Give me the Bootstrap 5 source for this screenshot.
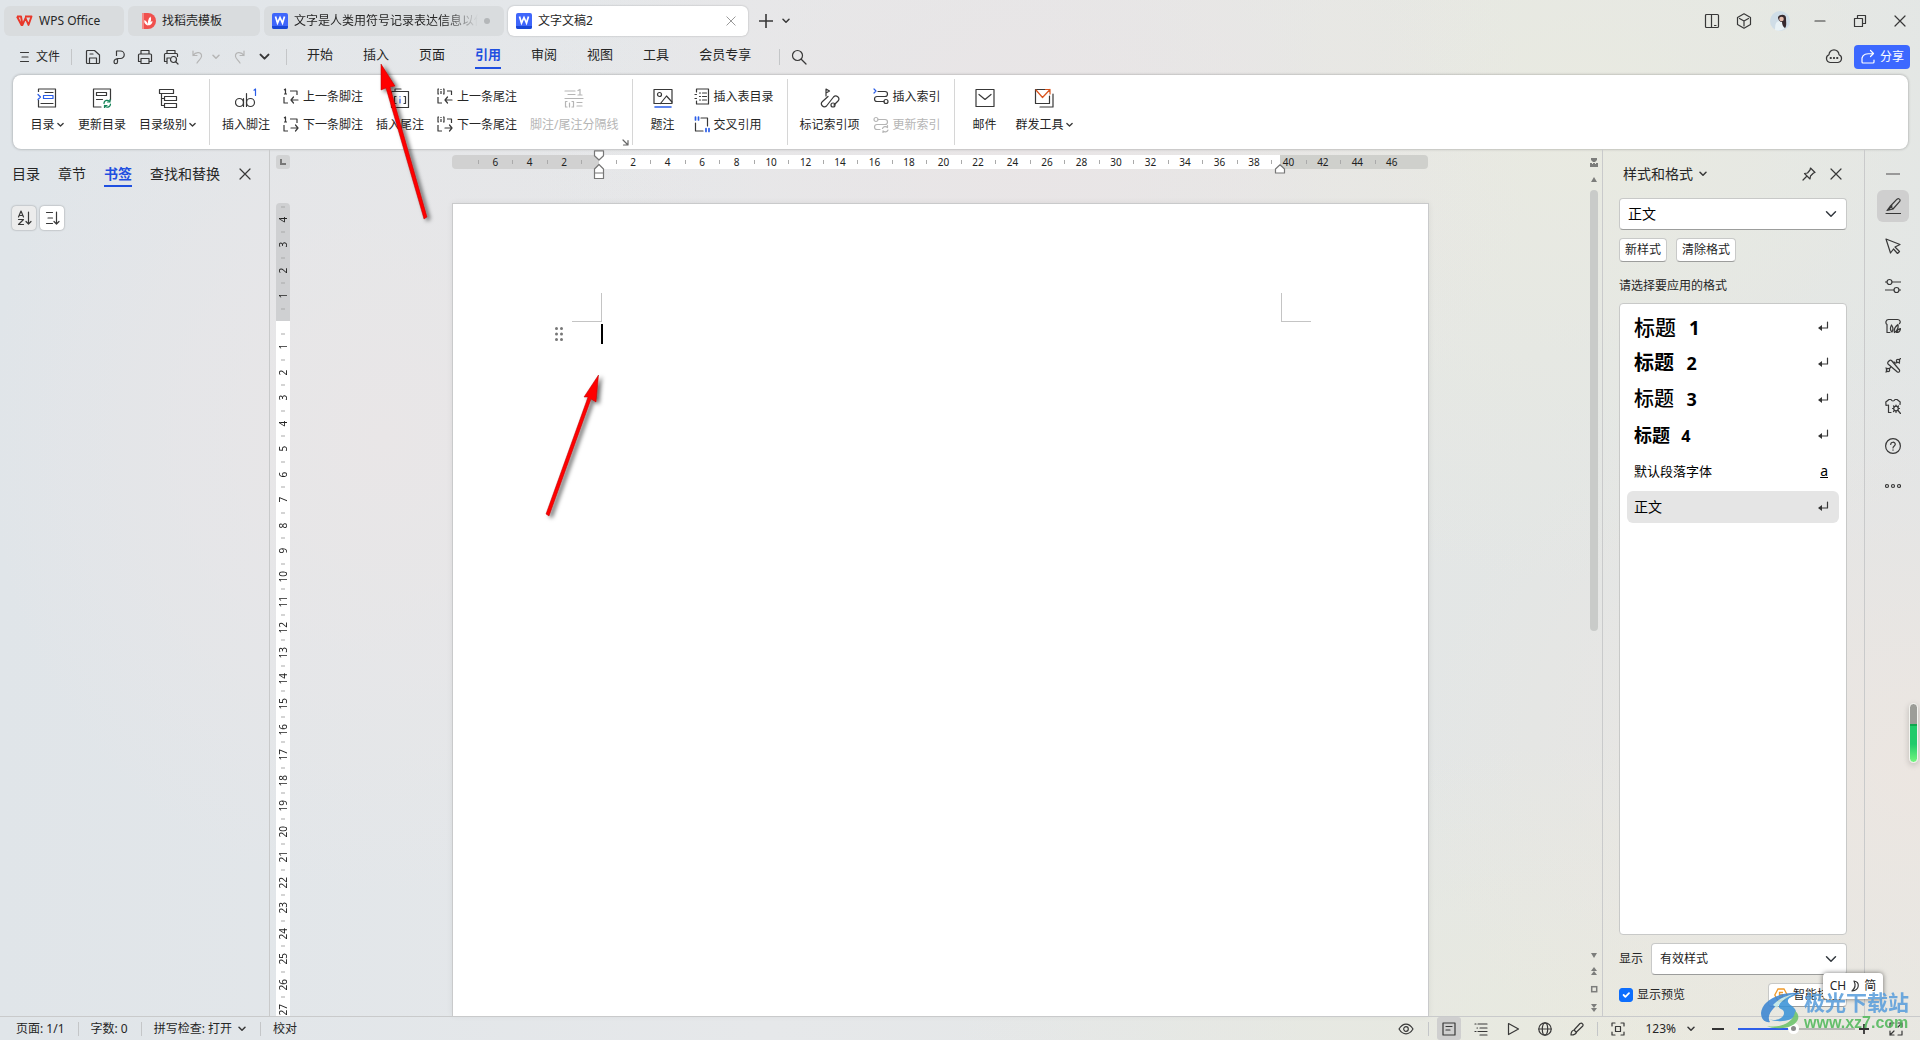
<!DOCTYPE html>
<html lang="zh-CN">
<head>
<meta charset="utf-8">
<meta name="viewport" content="width=device-width, initial-scale=1">
<title>文字文稿2 - WPS Office</title>
<link href="https://cdn.jsdelivr.net/npm/bootstrap@5.3.0/dist/css/bootstrap.min.css" rel="stylesheet">
<style>
:root{--ink:#262626;--edge:#c9cacb;--brand:#1f4fe0;--ui:"Noto Sans","Noto Sans CJK SC",sans-serif}
body{font:12px/16px var(--ui);color:var(--ink);background:
 radial-gradient(ellipse 500px 420px at 100% 74%,#ece6e1 0,#ece6e100 100%),
 radial-gradient(ellipse 500px 400px at 54% 14%,#e9e5e6 0,#e9e5e600 100%),
 radial-gradient(ellipse 400px 460px at 20% 42%,#e9e6e7 0,#e9e6e700 100%),
 radial-gradient(ellipse 560px 460px at 82% 12%,#e9eae1 0,#e9eae100 100%),
 radial-gradient(ellipse 700px 300px at 86% 100%,#e9eadf 0,#e9eadf00 100%),
 linear-gradient(90deg,#e0e5e9,#e6e8ea 40%,#e3e6e5 80%,#e1e5e7)}
svg{display:block;flex:none}
.ic{fill:none;stroke:#383838;stroke-width:1.2;stroke-linecap:round;stroke-linejoin:round}
button{border:0;background:none;padding:0;color:inherit;font:inherit;white-space:nowrap}
a{color:inherit;text-decoration:none}
.flat{display:flex;align-items:center;justify-content:center}
.vline{width:1px;background:#c4c6c8;flex:none}

/* title bar */
.titlebar{height:38px;padding:6px 0 2px 4px}
.doctab{height:30px;border-radius:6px;background:#d9dcde;padding:0 12px;display:flex;align-items:center;gap:6px}
.doctab.now{background:#fff;box-shadow:0 0 2px #0004;padding-left:8px;width:240px}
.docname{width:184px;overflow:hidden;white-space:nowrap;-webkit-mask-image:linear-gradient(90deg,#000 82%,#0000)}
.dot{width:6px;height:6px;border-radius:50%;background:#b4b7b9}
.win .flat{width:40px;height:28px}
.win .narrow{width:32px}

/* menu row */
.menurow{height:37px;padding-left:14px;padding-right:10px}
.menurow .vline{height:16px}
.quick .flat{width:26px;height:24px}
.quick .slim{width:12px}
.menus{gap:30px;font-size:13px;line-height:18px;padding:7px 0 0 20px}
.menus a{height:24px;border-bottom:2px solid transparent}
.menus a.on,.panetabs a.on{color:var(--brand);font-weight:700;border-bottom-color:var(--brand)}
.share{background:#3c68ff;color:#fff;border-radius:4px;width:56px;height:24px;gap:4px}
.share .ic{stroke:#fff}

/* ribbon */
.ribbon{margin:0 12px 0 13px;height:74px;background:#fff;border-radius:8px;box-shadow:0 0 3px #0005;padding-left:3px}
.rgroup{display:flex;gap:13px;padding:9px 13px 0;height:66px;margin-top:4px;position:relative}
.rgroup+.rgroup{border-left:1px solid #d6d6d6;padding-left:12px}
.rgroup:last-child{padding-right:0}
.big{display:flex;flex-direction:column;align-items:center;gap:9px;min-width:36px;height:45px}
.big span{display:flex;align-items:center;gap:2px}
.pairs{display:flex;flex-direction:column;gap:11px}
.pairs button{display:flex;align-items:center;gap:4px;height:17px}
.off{color:#b5b5b5}
.off .ic,.off.ic{stroke:#b5b5b5}
.launch{position:absolute;right:3px;bottom:-1px}

/* left pane */
.navpane{width:270px;border-right:1px solid var(--edge);padding:15px 12px 0}
.panetabs{gap:18px;font-size:14px;line-height:20px;height:24px}
.panetabs a{height:23px;border-bottom:2px solid transparent;white-space:nowrap}
.tool{width:24px;height:24px;border-radius:4px;background:#fff;box-shadow:0 0 2px #0006}
.tool.dim{background:#ececec}

/* document area */
.docarea{padding:6px 0 0 6px}
.num{font-size:10px;line-height:14px;color:#222}
.corner{width:14px;height:14px;border-radius:3px;background:#d2d3d4}
.hruler{height:14px;width:976px;border-radius:4px;padding:0 19px 0 26px;background:linear-gradient(90deg,#d1d1d1 147px,#fff 147px 828px,#cfd0cc 828px);position:relative}
.hruler span,.vruler span{flex:1 1 0;min-width:0;min-height:0;display:flex;align-items:center;justify-content:center;position:relative}
.hruler span::before{content:"";position:absolute;left:0;top:5px;height:4px;border-left:1px solid #aaa}
.marker{position:absolute}
.vruler{width:14px;overflow:hidden;border-radius:4px 4px 0 0;background:linear-gradient(#cfd0d2 118px,#fff 118px)}
.vrun{height:820px;padding-top:4px}
.vruler span{writing-mode:vertical-rl;transform:rotate(180deg)}
.vruler span::before{content:"";position:absolute;bottom:0;left:5px;width:4px;border-top:1px solid #aaa}
.sheet{width:977px;background:#fff;border:1px solid var(--edge);border-bottom:0;box-shadow:0 0 6px #0001;padding:89px 117px 0 119px}
.crop{width:30px;height:29px;border-bottom:1px solid #c4c4c4}
.crop.l{border-right:1px solid #c4c4c4}
.crop.r{border-left:1px solid #c4c4c4}
.caret{width:2px;height:20px;background:#000;margin-left:38px}
.lineedit{margin:2px 0 0 -17px}
.vbar{width:12px;padding:3px 4px 4px 0}
.thumb{width:8px;height:441px;border-radius:4px;background:#c9cbc9}

/* style pane */
.stylepane{width:262px;border-left:1px solid var(--edge);padding:14px 17px 9px 16px}
.box{background-color:#fff;border:1px solid #c8c9c8;border-bottom-color:#9c9d9c;border-radius:4px}
.stylepane .form-select{height:32px;padding:0 28px 0 8px;font-size:12px;line-height:20px;color:#222;background-size:12px 12px;background-position:right 9px center;box-shadow:none;font-family:var(--ui)}
.stylepane .form-select.lg{font-size:14px;color:#000}
.box.small-btn{height:24px;padding:0 5px}
.styles{border-bottom-color:#c8c9c8;padding:5px 7px}
.styles li{height:36px;padding:0 10px 0 7px;display:flex;align-items:center;justify-content:space-between;color:#000;line-height:30px}
.styles li.pick{height:32px;margin-top:2px;background:#e5e5e5;border-radius:6px;font-size:14px}
.h-a{font-size:21px;font-weight:500}.h-b{font-size:20px;font-weight:700}.h-c{font-size:20px;font-weight:500}.h-d{font-size:18px;font-weight:700}
.styles i{font-style:normal;font-weight:700;font-size:.9em;margin-left:.4em}
.stylepane .form-check-input{width:14px;height:14px;margin:0;background-color:#0d6efd}
.sidebar{width:56px;border-left:1px solid var(--edge);padding-top:17px;gap:8px}
.sidebar .flat{width:32px;height:32px;border-radius:6px}
.sidebar .flat.fold{height:16px}
.sidebar .on,.status .on{background:#cfcfcf}

/* status bar */
.status{height:24px;border-top:1px solid var(--edge);padding:0 12px 0 16px}
.status .vline{height:14px;margin:0 12px 0 13px}
.status .flat{width:24px;height:23px;border-radius:3px}
.zoom{appearance:none;width:117px;height:12px;background:linear-gradient(90deg,#2f5fe8 47%,#b6b8b4 47%) center/100% 2px no-repeat}
.zoom::-webkit-slider-thumb{appearance:none;width:11px;height:11px;border-radius:50%;background:#8a8a8a;border:3px solid #fff}

/* floating layers */
.arrows{position:absolute;left:360px;top:50px;pointer-events:none}
.meter{position:absolute;right:2px;top:703px;width:9px;height:60px;border:1px solid #f4f4f0;border-radius:5px;background:linear-gradient(#9c9d98 20px,#0fa84e 20px 22px,#20cb6b 22px 40px,#74f57f);box-shadow:0 2px 6px #0003}
.ime{position:absolute;right:37px;bottom:41px;width:60px;height:26px;border-radius:4px;background:#fff;box-shadow:0 0 5px #0008;gap:4px}
.wm{position:absolute;right:11px;bottom:8px;pointer-events:none;opacity:.88}
.wm-a{font-size:21px;line-height:24px;font-weight:700;color:#5b9fdc}
.wm-b{font:700 16px/18px "Liberation Sans",sans-serif;color:#52b95c}
</style>
</head>
<body class="vh-100 overflow-hidden position-relative">
<svg width="0" height="0" class="position-absolute">
 <defs>
 <symbol id="chev" viewBox="0 0 8 6"><path d="M1 1.200 4 4.200 7 1.200" stroke-width="1.500"/></symbol>
 <symbol id="x" viewBox="0 0 12 12"><path d="M1 1 11 11M11 1 1 11"/></symbol>
 <symbol id="word" viewBox="0 0 16 16"><rect width="16" height="16" rx="2" fill="#3f66fb" stroke="none"/><path d="M0 13h16v1a2 2 0 0 1-2 2H2a2 2 0 0 1-2-2z" fill="#1947d6" stroke="none"/><path d="M3.500 3.500 5.500 10 8 4.500 10.500 10 12.500 3.500" fill="none" stroke="#fff" stroke-width="1.700"/></symbol>
 <symbol id="ret" viewBox="0 0 12 12"><path d="M10.500 1v6H3"/><path d="M1 7 5 4v6z" fill="#333" stroke="none"/></symbol>
 <symbol id="foot" viewBox="0 0 16 17"><path d="M1 2 2.500 1v5M1 6h3M7 3h7v4M1 9v6h4" stroke-linecap="butt"/></symbol>
 <symbol id="end" viewBox="0 0 16 17"><path d="M2 1H1v5h1M6 1h1v5H6M4 1v1M4 3v3M10 3h4.500v4M1 9v6h4" stroke-linecap="butt"/></symbol>
 <symbol id="al" viewBox="0 0 16 17"><path d="M15 12H8M10.500 9 8 12l2.500 3"/></symbol>
 <symbol id="ar" viewBox="0 0 16 17"><path d="M8 12h7M12.500 9 15 12l-2.500 3"/></symbol>
 </defs>
</svg>

<div class="d-flex flex-column h-100">
<header>
 <div class="titlebar d-flex align-items-center">
  <nav class="d-flex align-items-center gap-1">
   <a href="#" class="doctab" style="width:120px"><svg width="17" height="12" viewBox="0 0 17 12"><path d="M1 1.500h4L6.500 10 9.500 3l3 7L15.500 1.500H9M1 1.500 5.500 10H7" fill="none" stroke="#e8382b" stroke-width="1.900" stroke-linejoin="round"/></svg><span>WPS Office</span></a>
   <a href="#" class="doctab" style="width:132px"><svg width="16" height="16" viewBox="0 0 16 16"><path d="M2 0h6a8 8 0 0 1 0 16H2z" fill="#f0504d"/><path d="M2 0h2v16H2z" fill="#f58a86"/><path d="M8 12.500C4 11.500 4 8 4.500 7c2 1 3.500 3 3.500 5.500zM8 12.500c-.5-3 0-7 2.500-9 1.300 3 .5 6-2.500 9zM8.500 12.500c.3-2 1.500-4 4-4.500 0 2.500-1.500 4.300-4 4.500z" fill="#fff"/></svg><span>找稻壳模板</span></a>
   <a href="#" class="doctab" style="width:240px;padding:0 8px"><svg width="16" height="16"><use href="#word"/></svg><span class="docname">文字是人类用符号记录表达信息以传</span><span class="dot"></span></a>
   <a href="#" class="doctab now"><svg width="16" height="16"><use href="#word"/></svg><span>文字文稿2</span><svg class="ic ms-auto" width="10" height="10" style="stroke:#999"><use href="#x"/></svg></a>
  </nav>
  <button class="flat ms-1" style="width:28px" aria-label="新建"><svg class="ic" width="14" height="14"><path d="M7 0v14M0 7h14" stroke-width="1.600"/></svg></button>
  <button class="flat" style="width:12px" aria-label="列表"><svg class="ic" width="8" height="6"><use href="#chev"/></svg></button>
  <div class="win d-flex align-items-center ms-auto">
   <button class="flat narrow" aria-label="分屏"><svg class="ic" width="16" height="16"><rect x="1.500" y="1.500" width="13" height="13" rx="1"/><path d="M7.500 1.500v13M10.500 12.500h1.500"/></svg></button>
   <button class="flat narrow" aria-label="应用"><svg class="ic" width="16" height="16"><path d="M8 .8 14.500 4.400v7.200L8 15.200 1.500 11.600V4.400zM3.500 5.500 8 8l4.500-2.500M8 8v5"/></svg></button>
   <button class="flat" aria-label="账户"><svg width="20" height="20"><circle cx="10" cy="10" r="10" fill="#cfdde7"/><path d="M5 19c0-6 1-9 5-9 3 0 4 4 4 8a10 10 0 0 1-9 1z" fill="#e9f2f6"/><path d="M8 6c2-3 8-3 8 1 0 4 1 8-1 10-2-1-3-4-3-6-2 0-4-2-4-5z" fill="#36292e"/><circle cx="11.500" cy="8" r="2.300" fill="#e6bdae"/></svg></button>
   <button class="flat" aria-label="最小化"><svg class="ic" width="12" height="12"><path d="M1 6h10"/></svg></button>
   <button class="flat" aria-label="还原"><svg class="ic" width="14" height="14"><path d="M1.500 4.500h8v8h-8zM4.500 4.500v-3h8v8h-3"/></svg></button>
   <button class="flat" aria-label="关闭"><svg class="ic" width="12" height="12"><use href="#x"/></svg></button>
  </div>
 </div>

 <div class="menurow d-flex">
  <div class="quick d-flex align-items-center">
   <button class="d-flex align-items-center" style="gap:6px;padding:0 11px 0 4px"><svg class="ic" width="12" height="12"><path d="M2.500 1.500h8M4 6h6M2.500 10.500h8"/></svg>文件</button>
   <span class="vline me-2"></span>
   <button class="flat" aria-label="保存"><svg class="ic" width="16" height="16"><path d="M1.500 2.500a1 1 0 0 1 1-1h7l5 4.500v7.500a1 1 0 0 1-1 1h-11a1 1 0 0 1-1-1zM4.500 14v-5h7v5M5 5h3"/></svg></button>
   <button class="flat" aria-label="输出"><svg class="ic" width="16" height="16"><path d="M5.500 6.500V2h4a3.700 3.700 0 0 1 0 7.500H6.500M6.500 9.500V13A1.700 1.700 0 0 1 3 13c0-2 2-3.500 5-3.500"/></svg></button>
   <button class="flat" aria-label="打印"><svg class="ic" width="16" height="16"><path d="M4 5V1.500h8V5M3.500 12.500h-2V6q0-1 1-1h11q1 0 1 1v6.500h-2M4 9.500h8v5H4z"/></svg></button>
   <button class="flat" aria-label="打印预览"><svg class="ic" width="16" height="16"><path d="M4 4.500V1.500h8v3M3.500 12.500h-2v-7q0-1 1-1h11q1 0 1 1v2M4 14.500V9h3"/><circle cx="10.500" cy="10.500" r="3"/><path d="m12.800 12.800 2.200 2.200"/></svg></button>
   <button class="flat off" aria-label="撤销"><svg class="ic" width="14" height="14"><path d="M3 1v4.500h4M3 5.500C6 1 12 2 11.500 6.500 11 9 9 10 7 13"/></svg></button>
   <button class="flat slim off" aria-label="撤销列表"><svg class="ic" width="8" height="6"><use href="#chev"/></svg></button>
   <button class="flat off" style="width:36px" aria-label="恢复"><svg class="ic" width="14" height="14"><path d="M11 1v4.500H7M11 5.500C8 1 2 2 2.500 6.500 3 9 5 10 7 13"/></svg></button>
   <button class="flat slim" aria-label="更多"><svg class="ic" width="11" height="8"><use href="#chev"/></svg></button>
   <span class="vline ms-3"></span>
  </div>
  <nav class="menus d-flex"><a href="#">开始</a><a href="#">插入</a><a href="#">页面</a><a href="#" class="on">引用</a><a href="#">审阅</a><a href="#">视图</a><a href="#">工具</a><a href="#">会员专享</a></nav>
  <div class="d-flex align-items-center" style="padding-left:28px"><span class="vline" style="margin-right:7px"></span><button class="flat px-1" aria-label="搜索"><svg class="ic" width="16" height="16"><circle cx="6.500" cy="6.500" r="5"/><path d="m10.500 10.500 4.500 4.500"/></svg></button></div>
  <div class="d-flex align-items-center ms-auto gap-2">
   <button class="flat" style="margin-right:3px" aria-label="云"><svg class="ic" width="18" height="16"><path d="M5 13.500a4 4 0 0 1-1-7.700 5 5 0 0 1 10 0 4 4 0 0 1-1 7.700z"/><path d="M5.500 9h.5M8.800 9h.4M12 9h.5" stroke-width="1.800"/></svg></button>
   <button class="share flat"><svg class="ic" width="16" height="16"><path d="M2 9v4q0 1 1 1h10q1 0 1-1v-2M2 9C3 5 6 4.500 13 4.500M10.500 1.500l3 3-3 3"/></svg>分享</button>
  </div>
 </div>

 <div class="ribbon d-flex">
  <div class="rgroup">
   <button class="big"><svg class="ic" width="20" height="20"><path d="M1.500 4V1h17v18h-17v-7" stroke-linecap="butt"/><path d="M8 4.500h8M4 15.500h12"/><path d="M6.500 7.500H16v3H6.500zM1 6.500 3.500 9 1 11.500" stroke="#2a5de8"/></svg><span>目录<svg class="ic" width="7" height="6"><use href="#chev"/></svg></span></button>
   <button class="big"><svg class="ic" width="20" height="20"><path d="M9 19H1.500V1h17v11M4.500 4.500h10v3h-10zM4.500 11.500h6"/><path d="M12 15.500a3.200 3.200 0 0 1 6-1.500M18 11.500V14h-2.500M18.500 16a3.200 3.200 0 0 1-6 1.500M12.500 20v-2.500H15" stroke="#17855a"/></svg><span>更新目录</span></button>
   <button class="big"><svg class="ic" width="20" height="20"><path d="M1.500 1.500h14v4h-14zM6.500 8.500h12v4h-12zM6.500 15.500h12v4h-12zM3.500 5.500v12h3M3.500 10.500h3"/></svg><span>目录级别<svg class="ic" width="7" height="6"><use href="#chev"/></svg></span></button>
  </div>
  <div class="rgroup">
   <button class="big"><svg class="ic" width="22" height="20"><circle cx="4.500" cy="14.500" r="4"/><path d="M8.500 10.500v8M11.500 5.500v13"/><circle cx="15.500" cy="14.500" r="4"/><path d="m19 2.200 1.500-1.200v6.500" stroke="#2a5de8"/></svg><span>插入脚注</span></button>
   <div class="pairs"><button><svg class="ic" width="16" height="17"><use href="#foot"/><use href="#al"/></svg>上一条脚注</button><button><svg class="ic" width="16" height="17"><use href="#foot"/><use href="#ar"/></svg>下一条脚注</button></div>
   <button class="big"><svg class="ic" width="20" height="20"><path d="M5 3V1h6M1.500 3.500h17v16h-17zM6 8.500H4.500v7H6M14 8.500h1.500v7H14"/><path d="M10 11v4M10 8.500v.3" stroke="#2a5de8"/></svg><span>插入尾注</span></button>
   <div class="pairs"><button><svg class="ic" width="16" height="17"><use href="#end"/><use href="#al"/></svg>上一条尾注</button><button><svg class="ic" width="16" height="17"><use href="#end"/><use href="#ar"/></svg>下一条尾注</button></div>
   <button class="big off" disabled><svg class="ic" width="20" height="20"><path d="M1 3h10M4 6.500h7M14 2.500 16 1.500v5M14 7h4M1 10.500h18M3 13.500H1.500v5.500H3M8 13.500h1.500v5.500H8M5.500 15v4M13 14.500h5M13 18h5"/></svg><span>脚注/尾注分隔线</span></button>
   <button class="launch" aria-label="脚注设置"><svg class="ic" width="7" height="7"><path d="M1 1 5 5M6 1.500V6H1.500" stroke="#666"/></svg></button>
  </div>
  <div class="rgroup">
   <button class="big"><svg class="ic" width="20" height="20"><path d="M1 1.500h18v14H1z"/><circle cx="6.500" cy="6.500" r="2"/><path d="m7.500 15.500 6-7.500 5.500 6"/><path d="M2 19h16" stroke="#2a5de8" stroke-width="1.600"/></svg><span>题注</span></button>
   <div class="pairs"><button><svg class="ic" width="16" height="17"><path d="M2.500 4V1h12v15h-12v-3M5.500 5h1M8.500 5h4M5.500 8.500h1M8.500 8.500h4M5.500 12h1M8.500 12h4M1 6.500h1.500M1 10.500h1.500"/></svg>插入表目录</button><button><svg class="ic" width="16" height="17"><path d="M7 2h6.500v8M9 15H1.500V7"/><path d="M1.500 1v3M4.500 1v3M12 12.500v3M15 12.500v3" stroke="#2a5de8" stroke-width="1.700"/></svg>交叉引用</button></div>
  </div>
  <div class="rgroup">
   <button class="big"><svg class="ic" width="20" height="20"><path d="M6 8V1l3.500 2L6 5M8 8.500l-5.500 5a3 3 0 0 0 4 4.500l7-9a3 3 0 0 1 4.500 4l-4 4"/><circle cx="13" cy="17" r="2"/></svg><span>标记索引项</span></button>
   <div class="pairs"><button><svg class="ic" width="16" height="17"><path d="M5 3.500h7a2.500 2.500 0 0 1 0 5H4a2.500 2.500 0 0 0 0 5h7"/><circle cx="13" cy="13.500" r="2"/><path d="M1 1l2 2-2 2" stroke="#2a5de8"/></svg>插入索引</button><button class="off" disabled><svg class="ic" width="16" height="17"><circle cx="3" cy="3.500" r="2"/><path d="M5 3.500h7a2.500 2.500 0 0 1 0 5H4a2.500 2.500 0 0 0 0 5h3M9.500 12.500a3 3 0 0 1 5-1v-2M15 14a3 3 0 0 1-5 1v2"/></svg>更新索引</button></div>
  </div>
  <div class="rgroup">
   <button class="big"><svg class="ic" width="20" height="20"><path d="M1 1.500h18v17H1zM4 6.500l6 5 6-5"/></svg><span>邮件</span></button>
   <button class="big"><svg class="ic" width="20" height="20"><path d="M13 1.500H1.500v14h14V8M19 6v13H6"/><path d="m2 2 6.500 7.500L16 1.500M11.500 1.500H16V6" stroke="#d9541e"/></svg><span>群发工具<svg class="ic" width="7" height="6"><use href="#chev"/></svg></span></button>
  </div>
 </div>
</header>

<main class="d-flex flex-grow-1" style="min-height:0">
 <aside class="navpane flex-shrink-0">
  <div class="d-flex align-items-start"><nav class="panetabs d-flex"><a href="#">目录</a><a href="#">章节</a><a href="#" class="on">书签</a><a href="#">查找和替换</a></nav><button class="flat" style="margin-left:19px;height:20px" aria-label="关闭窗格"><svg class="ic" width="12" height="12"><use href="#x"/></svg></button></div>
  <div class="d-flex gap-1" style="margin-top:18px">
   <button class="tool dim flat" aria-label="按名称排序"><svg class="ic" width="15" height="16"><path d="M1.500 7 4 1l2.500 6M2.200 5.500h3.600M1.500 9.500h5l-5 5h5M11.500 2v12M9 11.500l2.500 2.500 2.500-2.500"/></svg></button>
   <button class="tool flat" aria-label="按位置排序"><svg class="ic" width="15" height="16"><path d="M1.500 2.500h6M3 8h4.500M1.500 13.500h6M11.500 2v12M9 11.500l2.500 2.500 2.500-2.500"/></svg></button>
  </div>
 </aside>

 <section class="docarea d-flex flex-column flex-grow-1">
  <div class="d-flex" style="height:48px">
   <span class="corner flat"><svg width="6" height="6"><path d="M1 0v5h5" fill="none" stroke="#777" stroke-width="2"/></svg></span>
   <div class="flex-grow-1 d-flex justify-content-center">
    <div class="hruler num d-flex" id="hr">
     <svg class="marker ic" style="left:141px;top:-5px;stroke:#777" width="12" height="30"><path d="M1.500.8h9v5L6 10 1.500 5.800zM1.500 23v-4L6 14.500l4.500 4.500v4zM1.500 23h9v5.500h-9z" fill="#fff"/></svg>
     <svg class="marker ic" style="left:822px;top:9px;stroke:#777" width="12" height="10"><path d="M1.500 9V5L6 .8 10.500 5v4z" fill="#fff"/></svg>
    </div>
   </div>
   <div class="vbar pb-0 d-flex flex-column align-items-center" style="gap:10px"><svg width="8" height="9"><path d="M1 0h6v2L5 4H3L1 2zM0 5h2v1h1V5h2v1h1V5h2v4H0z" fill="#7c7d7b"/></svg><svg width="8" height="6"><path d="M4 0 7 5H1z" fill="#7c7d7b"/></svg></div>
  </div>
  <div class="d-flex flex-grow-1" style="min-height:0">
   <div class="vruler num flex-shrink-0"><div class="vrun d-flex flex-column" id="vr"></div></div>
   <div class="flex-grow-1 d-flex justify-content-center">
    <div class="sheet">
     <div class="d-flex justify-content-between"><span class="crop l"></span><span class="crop r"></span></div>
     <div class="lineedit d-flex align-items-center"><svg width="8" height="14" fill="#777"><circle cx="1.500" cy="1.500" r="1.500"/><circle cx="6.500" cy="1.500" r="1.500"/><circle cx="1.500" cy="7" r="1.500"/><circle cx="6.500" cy="7" r="1.500"/><circle cx="1.500" cy="12.500" r="1.500"/><circle cx="6.500" cy="12.500" r="1.500"/></svg><span class="caret"></span></div>
    </div>
   </div>
   <div class="vbar d-flex flex-column align-items-center" style="padding-top:0;margin-top:-13px">
    <div class="thumb"></div>
    <svg class="mt-auto" width="8" height="60" fill="#7c7d7b"><path d="M1 1h6L4 6zM4 15l3 4H1zM4 19l3 4H1zM4 60 1 56h6zM4 56 1 52h6z"/><rect x="1.700" y="34.700" width="5" height="5" fill="none" stroke="#7c7d7b" stroke-width="1.500"/></svg>
   </div>
  </div>
 </section>

 <aside class="stylepane d-flex flex-column flex-shrink-0">
  <div class="d-flex align-items-center" style="height:22px;padding:0 5px 0 4px"><span style="font-size:14px">样式和格式</span><svg class="ic" style="margin-left:6px" width="8" height="6"><use href="#chev"/></svg>
   <button class="ms-auto" aria-label="固定"><svg class="ic" width="14" height="14"><path d="m8.500 1 4.500 4.500-1.500.5-3 3-.5 3L2.500 6.500 5.500 6 8 3zM5 9 1 13"/></svg></button>
   <button style="margin-left:14px" aria-label="关闭"><svg class="ic" width="12" height="12"><use href="#x"/></svg></button></div>
  <select class="form-select box lg" style="margin-top:13px" aria-label="当前样式"><option>正文</option></select>
  <div class="d-flex" style="gap:9px;margin-top:8px"><button class="box small-btn">新样式</button><button class="box small-btn">清除格式</button></div>
  <div style="margin:16px 0 9px">请选择要应用的格式</div>
  <ul class="styles box list-unstyled flex-grow-1 mb-0">
   <li><span class="h-a">标题 <i>1</i></span><svg class="ic" width="12" height="12"><use href="#ret"/></svg></li>
   <li><span class="h-b">标题 <i>2</i></span><svg class="ic" width="12" height="12"><use href="#ret"/></svg></li>
   <li><span class="h-c">标题 <i>3</i></span><svg class="ic" width="12" height="12"><use href="#ret"/></svg></li>
   <li><span class="h-d">标题 <i>4</i></span><svg class="ic" width="12" height="12"><use href="#ret"/></svg></li>
   <li><span style="font-size:13px">默认段落字体</span><u style="font-size:14px;padding-right:1px">a</u></li>
   <li class="pick"><span>正文</span><svg class="ic" width="12" height="12"><use href="#ret"/></svg></li>
  </ul>
  <div class="d-flex align-items-center" style="gap:8px;margin-top:8px"><label for="show" class="text-nowrap">显示</label><select id="show" class="form-select box"><option>有效样式</option></select></div>
  <div class="d-flex align-items-center justify-content-between" style="margin-top:8px">
   <div class="d-flex align-items-center gap-1"><input class="form-check-input" type="checkbox" id="pv" checked><label for="pv">显示预览</label></div>
   <button class="box small-btn d-flex align-items-center" style="gap:5px"><svg width="14" height="14" fill="none" stroke="#f09a2a" stroke-width="1.300"><path d="M4 1h6l3.300 6L10 13H4L.8 7zM9 4.500H5.500v2.300h3v2.500H5"/></svg>智能排版</button>
  </div>
 </aside>

 <aside class="sidebar d-flex flex-column align-items-center flex-shrink-0">
  <button class="flat fold" aria-label="收起"><svg width="14" height="2"><path d="M0 1h14" stroke="#999" stroke-width="2"/></svg></button>
  <button class="flat on" aria-label="样式"><svg class="ic" width="16" height="16"><path d="M1 15.500h14.500M2 12.500 5 8.500 12 1.200q2-1.200 3 .6.300 1-.5 1.800L8 11zM5.500 8.500 8 11M3 12l4-4"/></svg></button>
  <button class="flat" aria-label="选择"><svg class="ic" width="16" height="16"><path d="M1 1 15 6.500 10 9l4.500 4.500-2 2L8.500 11 5.500 15z"/></svg></button>
  <button class="flat" aria-label="设置"><svg class="ic" width="16" height="16"><circle cx="4.500" cy="4" r="2.500"/><circle cx="11.500" cy="12" r="2.500"/><path d="M0 4h2M7 4h9M0 12h9M14 12h2"/></svg></button>
  <button class="flat" aria-label="写作"><svg class="ic" width="16" height="16"><path d="M5 14.500H2v-8C0 5 1 1.500 3.500 1.500h9C15 1.500 16 4 14.500 5.500M7 14C4.500 12 5.500 9 6.500 7c1.500 2 2 4.500.5 7M9.500 14.500c-1-3 1-6 3.500-8 .5 3-.5 6-3.500 8M11.500 14.500c.5-2 2-3.500 4-4-.3 2.500-2 4-4 4"/></svg></button>
  <button class="flat" aria-label="美化"><svg class="ic" width="16" height="16"><path d="m3 4 1.500-1.500q1-.8 2 0l8 9.500q.5 1-.3 1.800t-1.800.2L3 6q-.8-1 0-2z"/><circle cx="13" cy="3" r="1.700"/><circle cx="3" cy="12" r="1.700"/><path d="m14.500 1.500 1-1M11 5l1-1M4.500 10.500l1-1M1 14l1-1M10 5l-1-1M1 10l1 1M14.500 5l-.5-.5"/></svg></button>
  <button class="flat" aria-label="皮肤"><svg class="ic" width="16" height="16"><path d="M6 14.500H3.500V7L1 7.500.8 4 4 1.500h2c1 2 3 2 4 0h2L15.200 4 15 6.500"/><circle cx="11" cy="10.500" r="2.300"/><path d="M11 7v1M11 13v1.500M7.500 10.500h1M13.500 10.500h1M8.500 8l.8.800M13.500 8l-.8.800M8.500 13.500l.8-.8M15.500 15.500 13 12.500"/></svg></button>
  <button class="flat" aria-label="帮助"><svg class="ic" width="16" height="16"><circle cx="8" cy="8" r="7.400"/><path d="M5.700 6.500C5.700 3.500 10.300 3.500 10.300 6.300 10.300 8 8 8 8 10M8 11.800v.4"/></svg></button>
  <button class="flat" aria-label="更多"><svg class="ic" width="16" height="6"><circle cx="2" cy="3" r="1.500"/><circle cx="8" cy="3" r="1.500"/><circle cx="14" cy="3" r="1.500"/></svg></button>
 </aside>
</main>

<footer class="status d-flex align-items-center">
 <span>页面: 1/1</span><span class="vline"></span><span>字数: 0</span><span class="vline"></span>
 <button class="d-flex align-items-center" style="gap:6px">拼写检查: 打开<svg class="ic" width="8" height="6"><use href="#chev"/></svg></button><span class="vline" style="margin-left:14px"></span><span>校对</span>
 <div class="d-flex align-items-center ms-auto">
  <button class="flat" style="width:18px" aria-label="护眼"><svg class="ic" width="16" height="14"><path d="M1 7c4-6.500 10-6.500 14 0-4 6.500-10 6.500-14 0z"/><circle cx="8" cy="7" r="2.300"/></svg></button>
  <span class="vline" style="margin-right:8px"></span>
  <div class="d-flex gap-2">
   <button class="flat on" aria-label="页面视图"><svg class="ic" width="14" height="14"><path d="M1 1h12v12H1zM4 4.500h6M4 8h4"/></svg></button>
   <button class="flat" aria-label="大纲"><svg class="ic" width="14" height="14"><path d="M1 2h1M4 2h9M6 6h7M3 6h.5M1 9.500h1M4 9.500h9M6 13h7"/></svg></button>
   <button class="flat" aria-label="阅读"><svg class="ic" width="14" height="14"><path d="M2.500 1.500 12.500 7l-10 5.500z"/></svg></button>
   <button class="flat" aria-label="网页"><svg class="ic" width="14" height="14"><circle cx="7" cy="7" r="6.200"/><ellipse cx="7" cy="7" rx="2.700" ry="6.200"/><path d="M.8 7h12.400"/></svg></button>
   <button class="flat" aria-label="书写"><svg class="ic" width="14" height="14"><path d="M1 13c0-3 1-4.500 3-5l6-6.500q1.500-.8 2.500.3t.3 2.200L6.500 10c-.5 2-2.500 3-5.500 3zM4 8l2.500 2.500"/></svg></button>
  </div>
  <span class="vline" style="margin:0 8px"></span>
  <button class="flat" aria-label="适应"><svg class="ic" width="14" height="14"><path d="M1 4V1h3M10 1h3v3M13 10v3h-3M4 13H1v-3M4.500 4.500h5v5h-5z"/></svg></button>
  <button class="d-flex align-items-center" style="gap:11px;margin:0 17px 0 15px">123%<svg class="ic" width="8" height="6"><use href="#chev"/></svg></button>
  <button aria-label="缩小"><svg width="12" height="12"><path d="M0 6h12" stroke="#333" stroke-width="2"/></svg></button>
  <input type="range" class="zoom" style="margin:0 3px 0 14px" min="0" max="100" value="47" aria-label="缩放">
  <button aria-label="放大"><svg width="12" height="12"><path d="M1 6h10M6 1v10" stroke="#333" stroke-width="1.800"/></svg></button>
  <button class="flat" style="margin-left:14px" aria-label="全屏"><svg class="ic" width="14" height="14"><path d="M1 5V1h4M9 1h4v4M13 9v4H9M5 13H1V9M9 5l4-4M1 13l4-4"/></svg></button>
 </div>
</footer>
</div>

<div class="ime d-flex align-items-center justify-content-center">CH<svg class="ic" width="10" height="12"><path d="M4 1c6 1 6 9-2 10C5.500 8 5.500 4 4 1z"/></svg>简</div>
<div class="wm d-flex align-items-center">
 <svg width="44" height="40" viewBox="0 0 44 40"><path d="M42 2C18 0 2 10 1 22c0 7 5 10 9 9-5-8 6-21 32-29z" fill="#3c86d2"/><path d="M8 28c8 3 16-1 16-6 0-6-8-2-4-10 2-4 8-7 15-8-9 4-9 7-3 11 12 9-4 20-24 13z" fill="#3b94d8"/><path d="M7 35c16 3 28-6 28-15 8 6 1 16-12 17-7 .5-12 0-16-2z" fill="#6cc36a"/><path d="M13 14c5-6 14-10 22-11-9 3-15 8-18 14z" fill="#bfe6e6"/></svg>
 <div><div class="wm-a">极光下载站</div><div class="wm-b">www.xz7.com</div></div>
</div>
<div class="meter"></div>
<svg class="arrows" width="260" height="480" viewBox="360 50 260 480"><defs><filter id="sh" x="-30%" y="-10%" width="170%" height="130%"><feDropShadow dx="3" dy="2" stdDeviation="2" flood-opacity=".6"/></filter></defs>
 <g filter="url(#sh)" fill="red" stroke="#b00000" stroke-width=".5"><path d="M381 64 395 86 390 87 427 217 424 219 386 88 381 90z"/><path d="M598.500 375 596 402 591 399 549 516 546 514 588 397 584 397z"/></g></svg>

<script src="https://cdn.jsdelivr.net/npm/bootstrap@5.3.0/dist/js/bootstrap.bundle.min.js"></script>
<script>
// Rulers: the horizontal one counts characters by two, the vertical one counts lines.
const fill = (id, from, to, step) => {
  const box = document.getElementById(id);
  for (let n = from; n <= to; n += step) {
    const s = document.createElement('span');
    s.textContent = n === 0 ? '' : Math.abs(n);
    box.append(s);
  }
};
fill('hr', -6, 46, 2);
fill('vr', -4, 27, 1);
</script>
</body>
</html>
